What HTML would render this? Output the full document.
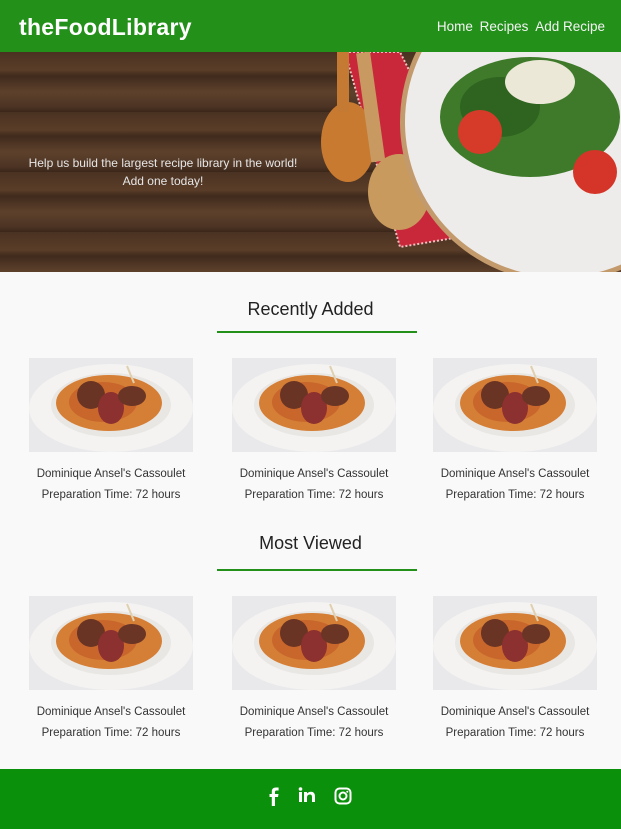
<!DOCTYPE html>
<html><head><meta charset="utf-8"><style>
*{margin:0;padding:0;box-sizing:border-box}
html,body{width:621px;height:829px;overflow:hidden}
body{background:#f9f9f9;font-family:"Liberation Sans",sans-serif;position:relative}
.hdr{position:absolute;left:0;top:0;width:621px;height:52px;background:#23901a}
.logo{position:absolute;left:19px;top:14px;color:#fff;font-size:23px;font-weight:bold;letter-spacing:0.3px}
.nav{position:absolute;right:16px;top:19px;color:#f4f4f4;font-size:13.5px}
.nav span{margin-left:3px}
.hero{position:absolute;left:0;top:52px;width:621px;height:220px;overflow:hidden;
background:repeating-linear-gradient(180deg,#4a3222 0,#5a3d28 18px,#3f2a1c 24px,#5e412c 40px,#4b3323 55px,#3a2619 60px)}
.hero p{position:absolute;left:0;width:326px;text-align:center;color:#e6e6e6;font-size:12px;line-height:18px;top:102px}
h2{position:absolute;width:621px;text-align:center;font-weight:normal;font-size:18px;color:#222}
.line{position:absolute;left:217px;width:200px;height:2px;background:#23901a}
.card{position:absolute;width:164px;text-align:center;font-size:11.5px;color:#333;line-height:21px}
.card svg{display:block;margin-bottom:12px}
.ft{position:absolute;left:0;top:769px;width:621px;height:60px;background:#0a900a}
.defs{position:absolute;width:0;height:0;left:0;top:0}
</style></head><body>
<svg class="defs"><defs><g id="dish">
<rect width="164" height="94" fill="#e9e9eb"/>
<ellipse cx="82" cy="50" rx="82" ry="44" fill="#f4f3f2"/>
<ellipse cx="82" cy="47" rx="60" ry="32" fill="#e9e7e4"/>
<ellipse cx="80" cy="45" rx="53" ry="28" fill="#d57f36"/>
<ellipse cx="74" cy="44" rx="34" ry="20" fill="#c8662c"/>
<ellipse cx="62" cy="37" rx="14" ry="14" fill="#6a3424"/>
<ellipse cx="82" cy="50" rx="13" ry="16" fill="#8c3030"/>
<ellipse cx="103" cy="38" rx="14" ry="10" fill="#6b3526"/>
<line x1="98" y1="8" x2="105" y2="25" stroke="#e0d0b0" stroke-width="2"/>
</g></defs></svg>
<div class="hdr"><div class="logo">theFoodLibrary</div><div class="nav"><span>Home</span> <span>Recipes</span> <span>Add Recipe</span></div></div>
<div class="hero">
<svg width="621" height="220" style="position:absolute;left:0;top:0">
<polygon points="345,0 400,0 490,180 400,195" fill="#c8283a"/>
<polygon points="345,0 400,0 490,180 400,195" fill="none" stroke="#f0c0c0" stroke-width="2" stroke-dasharray="2 2"/>
<ellipse cx="348" cy="90" rx="27" ry="40" fill="#c87a30"/>
<rect x="337" y="0" width="12" height="60" fill="#c47a32"/>
<ellipse cx="399" cy="140" rx="31" ry="38" fill="#c99a5e"/>
<rect x="363" y="0" width="14" height="110" fill="#c89a62" transform="rotate(-8 370 50)"/>
<circle cx="560" cy="70" r="160" fill="#c39a6c"/>
<circle cx="560" cy="70" r="155" fill="#eeeceb"/>
<ellipse cx="530" cy="65" rx="90" ry="60" fill="#3e7a2a"/>
<ellipse cx="500" cy="55" rx="40" ry="30" fill="#2f6420"/>
<ellipse cx="540" cy="30" rx="35" ry="22" fill="#ece8d8"/>
<circle cx="480" cy="80" r="22" fill="#d63b2a"/>
<circle cx="595" cy="120" r="22" fill="#d43528"/>
</svg>
<p>Help us build the largest recipe library in the world!<br>Add one today!</p></div>
<h2 style="top:299px">Recently Added</h2><div class="line" style="top:331px"></div>
<h2 style="top:533px">Most Viewed</h2><div class="line" style="top:569px"></div>
<div class="card" style="left:29px;top:358px"><svg width="164" height="94"><use href="#dish"/></svg>Dominique Ansel's Cassoulet<br>Preparation Time: 72 hours</div>
<div class="card" style="left:232px;top:358px"><svg width="164" height="94"><use href="#dish"/></svg>Dominique Ansel's Cassoulet<br>Preparation Time: 72 hours</div>
<div class="card" style="left:433px;top:358px"><svg width="164" height="94"><use href="#dish"/></svg>Dominique Ansel's Cassoulet<br>Preparation Time: 72 hours</div>
<div class="card" style="left:29px;top:596px"><svg width="164" height="94"><use href="#dish"/></svg>Dominique Ansel's Cassoulet<br>Preparation Time: 72 hours</div>
<div class="card" style="left:232px;top:596px"><svg width="164" height="94"><use href="#dish"/></svg>Dominique Ansel's Cassoulet<br>Preparation Time: 72 hours</div>
<div class="card" style="left:433px;top:596px"><svg width="164" height="94"><use href="#dish"/></svg>Dominique Ansel's Cassoulet<br>Preparation Time: 72 hours</div>
<div class="ft"><svg width="621" height="60" style="display:block">
<path d="M275 37 V28 H278 L278.5 25 H275 V23 Q275 21.5 276.5 21.5 H278.6 V18.5 H276 Q271.8 18.5 271.8 22.5 V25 H269.5 V28 H271.8 V37 Z" fill="#fff"/>
<rect x="299" y="23" width="3" height="10" fill="#fff"/><circle cx="300.5" cy="20" r="1.8" fill="#fff"/>
<path d="M304 33 V23 H307 V24.5 Q308.5 22.7 311 22.7 Q315 22.7 315 27.5 V33 H312 V28 Q312 25.5 310 25.5 Q307 25.5 307 28.5 V33 Z" fill="#fff"/>
<rect x="335.5" y="19.5" width="15" height="15" rx="4" fill="none" stroke="#fff" stroke-width="2"/>
<circle cx="343" cy="27" r="3.5" fill="none" stroke="#fff" stroke-width="2"/><circle cx="347.3" cy="22.7" r="1" fill="#fff"/>
</svg></div>
</body></html>
